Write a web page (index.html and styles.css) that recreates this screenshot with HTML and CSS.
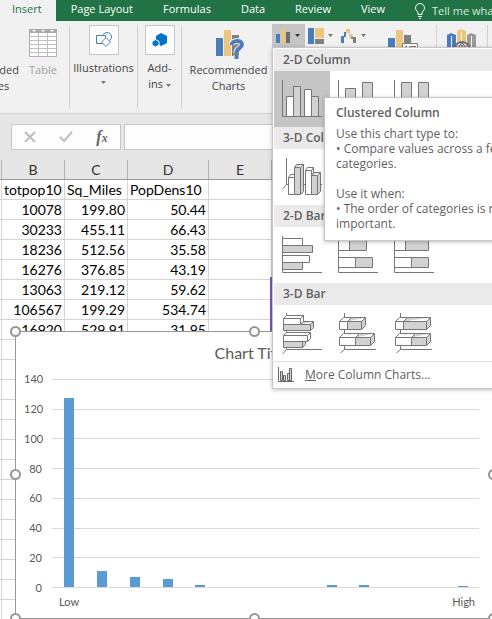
FILE: index.html
```html
<!DOCTYPE html>
<html lang="en">
<head>
<meta charset="UTF-8">
<meta name="viewport" content="width=device-width, initial-scale=1.0">
<title>Insert Column Chart</title>
<link rel="stylesheet" href="styles.css">
</head>
<body>
<nav class="tabs">
    <a href="#" class="tab active">Insert</a>
    <a href="#" class="tab">Page Layout</a>
    <a href="#" class="tab">Formulas</a>
    <a href="#" class="tab">Data</a>
    <a href="#" class="tab">Review</a>
    <a href="#" class="tab">View</a>
    <a href="#" class="tab tell-me">
        <svg width="10" height="16" viewBox="0 0 10 16" fill="none" stroke="#fff"><path d="M3 11.500V10C3 8.500.5 7.500.5 5A4.500 4.500 0 0 1 9.500 5C9.500 7.500 7 8.500 7 10V11.500ZM3 13.500H7M4 15.500H6"/></svg>
        Tell me what you want to do
    </a>
</nav>

<div class="ribbon">
    <button class="tool pivot">
        <svg width="30" height="30" viewBox="0 0 30 30"><path fill="#fff" stroke="#7f7f7f" d="M.5.5H29.500V29.500H.5ZM.5 8.500H29.500M8.500.5V29.500"/></svg>
        <span>Recommended<br>PivotTables</span>
    </button>
    <button class="tool table-tool" disabled>
        <svg width="28" height="28" viewBox="0 0 28 28"><path fill="#fff" stroke="#b5adb5" d="M.5.5H27.500V27.500H.5Z"/><path fill="#aaa" d="M0 0H28V4H0Z"/><path fill="#fff" d="M3 1H7L5 3ZM12 1H16L14 3ZM21 1H25L23 3Z"/><path stroke="#c3bcc3" d="M9.500 4V27M18.500 4V27M1 7.500H27M1 11.500H27M1 15.500H27M1 19.500H27M1 23.500H27"/></svg>
        <span>Table</span>
    </button>
    <div class="divider"></div>
    <button class="tool boxed illustrations">
        <span class="icon-box"><svg width="18" height="18" viewBox="0 0 18 18" fill="#fff" stroke="#4a7ebb"><circle cx="12" cy="6" r="4.500"/><path d="M1.500 4.500H10.500V12.500H1.500Z"/><path d="M11 6.500L15.500 11L11 15.500L6.500 11Z"/></svg></span>
        <span>Illustrations</span>
        <svg class="arrow" width="5" height="3"><path d="M0 0H5L2.500 3Z"/></svg>
    </button>
    <div class="divider"></div>
    <button class="tool boxed addins">
        <span class="icon-box"><svg width="16" height="16" viewBox="0 0 16 16" fill="#0072c6"><path d="M9 1L15 4V11L9 14L4 11V4Z"/><path stroke="#fdfdfd" d="M3.500 7.500L7 9.500V13L3.500 15L0 13V9.500Z"/></svg></span>
        <span>Add-<br>ins <svg class="arrow inline" width="5" height="3"><path d="M0 0H5L2.500 3Z"/></svg></span>
    </button>
    <div class="divider"></div>
    <button class="tool recommended">
        <svg width="30" height="30" viewBox="0 0 30 30"><path fill="#4a7ebb" d="M2 9H9V27H2Z"/><path fill="#ecc67c" d="M10 1H17V27H10Z"/><path fill="#7f7f7f" d="M18 6H25V27H18Z"/><path fill="none" stroke="#f1f1f1" stroke-width="6" d="M17.500 16C18 11 28 10.500 28 15.500C28 19 22.500 19 22.500 24M22.500 26V30"/><path fill="none" stroke="#4a7ebb" stroke-width="4" d="M17.500 16C18 11 28 10.500 28 15.500C28 19 22.500 19 22.500 24M22.500 26V30"/></svg>
        <span>Recommended<br>Charts</span>
    </button>
    <div class="chart-buttons">
        <div class="menu-anchor">
            <button class="chart-btn open" aria-label="Column chart">
                <svg width="16" height="16" viewBox="0 0 16 16"><path fill="#4a7ebb" d="M1 6H5V15H1Z"/><path fill="#ecc67c" d="M6 1H10V15H6Z"/><path fill="#6d6d6d" d="M11 4H15V15H11Z"/></svg>
                <svg class="arrow" width="5" height="3"><path d="M0 0H5L2.500 3Z"/></svg>
            </button>
            <div class="chart-menu">
                <h3>2-D Column</h3>
                <div class="choices">
                    <button class="choice selected" aria-label="Clustered Column">
                        <svg class="type-icon" viewBox="0 0 40 42"><path class="g" d="M11.500 7.500H18.500V37.500H11.500ZM29.500 17.500H36.500V37.500H29.500Z"/><path class="w" d="M4.500 17.500H11.500V37.500H4.500ZM22.500 10.500H29.500V37.500H22.500Z"/><path d="M.5 1V37.500H40"/></svg>
                    </button>
                    <button class="choice" aria-label="Stacked Column">
                        <svg class="type-icon" viewBox="0 0 40 42"><path class="g" d="M7.500 9.500H17.500V24.500H7.500ZM24.500 3.500H34.500V20.500H24.500Z"/><path class="w" d="M7.500 24.500H17.500V37.500H7.500ZM24.500 20.500H34.500V37.500H24.500Z"/><path d="M.5 1V37.500H40"/></svg>
                    </button>
                    <button class="choice" aria-label="100% Stacked Column">
                        <svg class="type-icon" viewBox="0 0 40 42"><path class="g" d="M7.500 3.500H17.500V24.500H7.500ZM24.500 3.500H34.500V20.500H24.500Z"/><path class="w" d="M7.500 24.500H17.500V37.500H7.500ZM24.500 20.500H34.500V37.500H24.500Z"/><path d="M.5 1V37.500H40"/></svg>
                    </button>
                </div>
                <h3>3-D Column</h3>
                <div class="choices">
                    <button class="choice" aria-label="3-D Clustered Column">
                        <svg class="type-icon" viewBox="0 0 40 42"><path d="M4.500 1V27.500H40M4.500 27.500L.5 32"/><path class="w" d="M6.500 20.500L8.500 17.500H14.500V37.500H6.500ZM6.500 20.500H12.500M23.500 13.500L25.500 10.500H31.500V37.500H23.500ZM23.500 13.500H29.500L31.500 10.500M29.500 13.500V37.500"/><path class="g" d="M12.500 10.500L14.500 7.500H21.500V34.500L18.500 37.500H12.500ZM12.500 10.500H18.500L21.500 7.500M18.500 10.500V37.500M29.500 18.500L31.500 15.500H38.500V34.500L35.500 37.500H29.500ZM29.500 18.500H35.500L38.500 15.500M35.500 18.500V37.500"/></svg>
                    </button>
                </div>
                <h3>2-D Bar</h3>
                <div class="choices">
                    <button class="choice" aria-label="Clustered Bar">
                        <svg class="type-icon" viewBox="0 0 40 42"><path class="w" d="M.5 3.500H20.500V10.500H.5ZM.5 20.500H27.500V27.500H.5Z"/><path class="g" d="M.5 10.500H30.500V17.500H.5ZM.5 27.500H20.500V34.500H.5Z"/><path d="M.5 1V37.500H40"/></svg>
                    </button>
                    <button class="choice" aria-label="Stacked Bar">
                        <svg class="type-icon" viewBox="0 0 40 42"><path class="w" d="M.5 5.500H11.500V15.500H.5ZM.5 22.500H17.500V32.500H.5Z"/><path class="g" d="M11.500 5.500H28.500V15.500H11.500ZM17.500 22.500H34.500V32.500H17.500Z"/><path d="M.5 1V37.500H40"/></svg>
                    </button>
                    <button class="choice" aria-label="100% Stacked Bar">
                        <svg class="type-icon" viewBox="0 0 40 42"><path class="w" d="M.5 5.500H11.500V15.500H.5ZM.5 22.500H17.500V32.500H.5Z"/><path class="g" d="M11.500 5.500H34.500V15.500H11.500ZM17.500 22.500H34.500V32.500H17.500Z"/><path d="M.5 1V37.500H40"/></svg>
                    </button>
                </div>
                <h3>3-D Bar</h3>
                <div class="choices">
                    <button class="choice" aria-label="3-D Clustered Bar">
                        <svg class="type-icon" viewBox="0 0 40 42"><path d="M4.500 0V36.500H40M4.500 36.500L.5 41"/><path class="w" d="M1.500 5.500L4.500 2.500H21.500V8.500L18.500 11.500H1.500ZM1.500 5.500H18.500L21.500 2.500M18.500 5.500V11.500M1.500 22.500L4.500 19.500H28.500V25.500L25.500 28.500H1.500ZM1.500 22.500H25.500L28.500 19.500M25.500 22.500V28.500"/><path class="g" d="M1.500 11.500H18.500L21.500 8.500H31.500V14.500L28.500 17.500H1.500ZM18.500 11.500H28.500L31.500 8.500M28.500 11.500V17.500M1.500 28.500H23.500V31.500L20.500 34.500H1.500ZM20.500 28.500V34.500"/></svg>
                    </button>
                    <button class="choice" aria-label="3-D Stacked Bar">
                        <svg class="type-icon" viewBox="0 0 40 42"><path d="M6.500 0V36.500H38M6.500 36.500L2.500 40"/><path class="w" d="M1.500 8.500L5.500 4.500H13.500L9.500 8.500V16.500H1.500ZM1.500 8.500H9.500M1.500 24.500L5.500 20.500H21.500L17.500 24.500V32.500H1.500ZM1.500 24.500H17.500"/><path class="g" d="M9.500 8.500L13.500 4.500H27.500V12.500L23.500 16.500H9.500ZM9.500 8.500H23.500L27.500 4.500M23.500 8.500V16.500M17.500 24.500L21.500 20.500H36.500V28.500L32.500 32.500H17.500ZM17.500 24.500H32.500L36.500 20.500M32.500 24.500V32.500"/></svg>
                    </button>
                    <button class="choice" aria-label="3-D 100% Stacked Bar">
                        <svg class="type-icon" viewBox="0 0 40 42"><path d="M6.500 0V36.500H38M6.500 36.500L2.500 40"/><path class="w" d="M1.500 8.500L5.500 4.500H13.500L9.500 8.500V16.500H1.500ZM1.500 8.500H9.500M1.500 24.500L5.500 20.500H21.500L17.500 24.500V32.500H1.500ZM1.500 24.500H17.500"/><path class="g" d="M9.500 8.500L13.500 4.500H36.500V12.500L32.500 16.500H9.500ZM9.500 8.500H32.500L36.500 4.500M32.500 8.500V16.500M17.500 24.500L21.500 20.500H36.500V28.500L32.500 32.500H17.500ZM17.500 24.500H32.500L36.500 20.500M32.500 24.500V32.500"/></svg>
                    </button>
                </div>
                <button class="more">
                    <svg width="16" height="16" viewBox="0 0 16 16" fill="#d0d0d0" stroke="#666"><path d="M2.500 4.500H4.500V13.500H2.500ZM5.500 8.500H7.500V13.500H5.500ZM9.500 6.500H11.500V13.500H9.500ZM11.500 1.500H13.500V13.500H11.500Z"/><path fill="none" d="M.5 0V14.500H16"/></svg>
                    <span><u>M</u>ore Column Charts...</span>
                </button>
                <div class="tooltip">
                    <strong>Clustered Column</strong>
                    <p>Use this chart type to:<br>• Compare values across a few<br>categories.</p>
                    <p>Use it when:<br>• The order of categories is not<br>important.</p>
                </div>
            </div>
        </div>
        <button class="chart-btn" aria-label="Hierarchy chart">
            <svg width="16" height="16" viewBox="0 0 16 16"><path fill="#4a7ebb" d="M0 0H6V16H0Z"/><path fill="#ecc67c" d="M7 0H16V10H7Z"/><path fill="#7f7f7f" d="M7 11H16V16H7Z"/></svg>
            <svg class="arrow" width="5" height="3"><path d="M0 0H5L2.500 3Z"/></svg>
        </button>
        <button class="chart-btn" aria-label="Waterfall chart">
            <svg width="16" height="16" viewBox="0 0 16 16"><path fill="#4a7ebb" d="M0 8H3V15H0ZM3 4H5V9H3Z"/><path fill="#ecc67c" d="M5 1H9V5H5ZM8 1H9V9H8ZM9 6H12V10H9Z"/><path fill="#7f7f7f" d="M10 9H15V15H12V11H10Z"/></svg>
            <svg class="arrow" width="5" height="3"><path d="M0 0H5L2.500 3Z"/></svg>
        </button>
    </div>
    <button class="tool pivot-chart" aria-label="PivotChart">
        <svg width="32" height="30" viewBox="0 0 32 30"><path fill="#4a7ebb" d="M0 9H7V27H0Z"/><path fill="#ecc67c" d="M8 1H15V27H8Z"/><path fill="#7f7f7f" d="M16 6H23V27H16Z"/><path fill="#fff" stroke="#7f7f7f" d="M14.500 14.500H29.500V29.500H14.500ZM17 17.500H19M21 17.500H28"/></svg>
    </button>
    <div class="divider"></div>
    <button class="tool map" aria-label="3D Map">
        <svg width="30" height="30" viewBox="0 0 30 30"><path fill="#4a7ebb" d="M0 6L4 4L9 6V27H0Z"/><path fill="#ecc67c" d="M10 2L14 0L19 2V27H10Z"/><path fill="#9a9a9a" d="M20 6L24 4L29 6V27H20Z"/><path stroke="#f1f1f1" d="M4.500 7V27M14.500 3V27M24.500 7V27"/><circle cx="15" cy="21" r="8" fill="#fff" stroke="#6d6d6d" stroke-width="2"/><path fill="none" stroke="#6d6d6d" d="M15 13V29M7 21H23M9 17H21M15 13Q8 21 15 29M15 13Q22 21 15 29"/></svg>
    </button>
    <div class="divider"></div>
</div>

<div class="formula-bar">
    <div class="formula-buttons">
        <button aria-label="Cancel"><svg width="12" height="12" viewBox="0 0 12 12" fill="none" stroke="#bdbdbd" stroke-width="2"><path d="M1 1L11 11M11 1L1 11"/></svg></button>
        <button aria-label="Enter"><svg width="14" height="12" viewBox="0 0 14 12" fill="none" stroke="#bdbdbd" stroke-width="2"><path d="M1 6L5 10L13 1"/></svg></button>
        <button aria-label="Insert Function"><i>f<small>x</small></i></button>
    </div>
    <input class="formula-input" type="text" aria-label="Formula">
</div>

<div class="sheet">
    <table class="cells">
        <colgroup><col class="col-a"><col class="col-b"><col class="col-c"><col class="col-d"><col class="col-e"><col></colgroup>
        <thead>
            <tr><th></th><th>B</th><th>C</th><th>D</th><th>E</th><th></th></tr>
        </thead>
        <tbody>
            <tr class="names"><td></td><td>totpop10</td><td>Sq_Miles</td><td>PopDens10</td><td></td><td></td></tr>
            <tr><td></td><td>10078</td><td>199.80</td><td>50.44</td><td></td><td></td></tr>
            <tr><td></td><td>30233</td><td>455.11</td><td>66.43</td><td></td><td></td></tr>
            <tr><td></td><td>18236</td><td>512.56</td><td>35.58</td><td></td><td></td></tr>
            <tr><td></td><td>16276</td><td>376.85</td><td>43.19</td><td></td><td></td></tr>
            <tr><td></td><td>13063</td><td>219.12</td><td>59.62</td><td></td><td></td></tr>
            <tr><td></td><td>106567</td><td>199.29</td><td>534.74</td><td></td><td></td></tr>
            <tr><td></td><td>16920</td><td>529.91</td><td>31.95</td><td></td><td></td></tr>
            <tr><td></td><td></td><td></td><td></td><td></td><td></td></tr>
            <tr><td></td><td></td><td></td><td></td><td></td><td></td></tr>
            <tr><td></td><td></td><td></td><td></td><td></td><td></td></tr>
            <tr><td></td><td></td><td></td><td></td><td></td><td></td></tr>
            <tr><td></td><td></td><td></td><td></td><td></td><td></td></tr>
            <tr><td></td><td></td><td></td><td></td><td></td><td></td></tr>
            <tr><td></td><td></td><td></td><td></td><td></td><td></td></tr>
            <tr><td></td><td></td><td></td><td></td><td></td><td></td></tr>
            <tr><td></td><td></td><td></td><td></td><td></td><td></td></tr>
            <tr><td></td><td></td><td></td><td></td><td></td><td></td></tr>
            <tr><td></td><td></td><td></td><td></td><td></td><td></td></tr>
            <tr><td></td><td></td><td></td><td></td><td></td><td></td></tr>
            <tr><td></td><td></td><td></td><td></td><td></td><td></td></tr>
            <tr><td></td><td></td><td></td><td></td><td></td><td></td></tr>
        </tbody>
    </table>
    <div class="range-marker"></div>

    <div class="chart">
        <h2>Chart Title</h2>
        <div class="plot-row">
            <div class="y-axis"><span>140</span><span>120</span><span>100</span><span>80</span><span>60</span><span>40</span><span>20</span><span>0</span></div>
            <div class="plot">
                <div class="gridlines"><hr><hr><hr><hr><hr><hr><hr><hr></div>
                <div class="bars">
                    <div><b style="height: 91%"></b></div>
                    <div><b style="height: 7.7%"></b></div>
                    <div><b style="height: 5%"></b></div>
                    <div><b style="height: 4%"></b></div>
                    <div><b style="height: 1%"></b></div>
                    <div></div>
                    <div></div>
                    <div></div>
                    <div><b style="height: 1%"></b></div>
                    <div><b style="height: 1%"></b></div>
                    <div></div>
                    <div></div>
                    <div><b style="height: 0.5%"></b></div>
                </div>
            </div>
        </div>
        <div class="x-axis"><span>Low</span><span>High</span></div>
        <i class="handle top left"></i>
        <i class="handle top center"></i>
        <i class="handle middle left"></i>
        <i class="handle middle right"></i>
        <i class="handle bottom left"></i>
        <i class="handle bottom center"></i>
        <i class="handle bottom right"></i>
    </div>
</div>
</body>
</html>
```
FILE: styles.css
```css
* {
    box-sizing: border-box;
}
body {
    margin: 0;
    min-height: 100vh;
    overflow: hidden;
    font-family: "Open Sans", "Noto Sans", sans-serif;
    font-size: 12px;
    color: #444;
    background: #fff;
}
button {
    padding: 0;
    border: 0;
    background: none;
    color: inherit;
    font: inherit;
}
svg {
    display: block;
    flex: none;
}

/* tabs */
.tabs {
    display: flex;
    height: 21px;
    background: #217346;
    font-size: 11px;
    overflow: hidden;
}
.tab {
    flex: none;
    padding: 0 15px;
    line-height: 18px;
    color: #fff;
    text-decoration: none;
    white-space: nowrap;
}
.tab.active {
    padding: 0 14px 0 12px;
    background: #f1f1f1;
    color: #217346;
}
.tell-me {
    display: flex;
    align-items: center;
    gap: 7px;
    color: #d8e8de;
}

/* ribbon */
.ribbon {
    display: flex;
    height: 93px;
    background: #f1f1f1;
    border-bottom: 1px solid #d2d2d2;
    overflow-x: clip;
}
.tool {
    display: flex;
    flex: none;
    flex-direction: column;
    align-items: center;
    gap: 3px;
    padding-top: 8px;
    font-size: 11px;
    line-height: 16px;
    text-align: center;
    white-space: nowrap;
}
.divider {
    flex: none;
    width: 1px;
    height: 84px;
    margin-top: 4px;
    background: #d2d2d2;
}
.boxed {
    gap: 5px;
    padding-top: 4px;
}
.icon-box {
    display: flex;
    align-items: center;
    justify-content: center;
    width: 30px;
    height: 30px;
    border: 1px solid #c6c6c6;
    background: #fdfdfd;
}
.arrow {
    fill: #777;
}
.arrow.inline {
    display: inline-block;
    vertical-align: middle;
}
.chart-buttons {
    display: flex;
    flex: none;
    align-items: flex-start;
    padding-top: 3px;
}
.chart-btn {
    display: flex;
    align-items: center;
    gap: 4px;
    width: 33px;
    height: 23px;
    padding-left: 3px;
}
.chart-btn.open {
    background: #c5c5c5;
}
.chart-btn.open .arrow {
    fill: #333;
}

.pivot {
    width: 82px;
    margin-left: -61px;
}
.table-tool {
    gap: 5px;
    width: 44px;
    margin-right: 4px;
    color: #a0a0a0;
}
.illustrations {
    width: 67px;
}
.addins {
    width: 43px;
}
.recommended {
    width: 87px;
    margin-left: 3px;
}
.pivot-chart {
    width: 65px;
}
.map {
    width: 50px;
}

/* column chart menu */
.menu-anchor {
    position: relative;
}
.chart-menu {
    position: absolute;
    z-index: 2;
    top: 100%;
    left: 0;
    width: 260px;
    padding: 1px;
    border: 1px solid #c6c6c6;
    background: #fff;
    box-shadow: 0 1px 4px rgba(0, 0, 0, 0.25);
    color: #5f5f5f;
}
.chart-menu h3 {
    margin: 0;
    padding-left: 9px;
    background: #eaeaea;
    font-size: 12px;
    font-weight: 600;
    line-height: 22px;
}
.choices {
    display: flex;
}
.choice {
    width: 56px;
    height: 56px;
    padding: 8px;
}
.choice.selected {
    background: #c5c5c5;
}
.type-icon {
    width: 40px;
    height: 42px;
    fill: none;
    stroke: #767676;
}
.type-icon .w {
    fill: #fff;
}
.type-icon .g {
    fill: #d2d2d2;
}
.more {
    display: flex;
    align-items: center;
    gap: 11px;
    width: 100%;
    height: 26px;
    padding-left: 4px;
    border-top: 1px solid #dedede;
}
.tooltip {
    position: absolute;
    top: 49px;
    left: 51px;
    width: 200px;
    padding: 7px 11px;
    border: 1px solid #c6c6c6;
    background: #fff;
    box-shadow: 0 1px 4px rgba(0, 0, 0, 0.25);
    line-height: 15px;
    white-space: nowrap;
}
.tooltip strong {
    font-weight: 600;
}
.tooltip p {
    margin: 6px 0 15px;
}
.tooltip p + p {
    margin: 0 0 2px;
}

/* formula bar */
.formula-bar {
    display: flex;
    gap: 3px;
    height: 46px;
    padding: 10px 0 10px 11px;
    background: #e6e6e6;
}
.formula-buttons {
    display: flex;
    flex: none;
    width: 110px;
    border: 1px solid #c6c6c6;
    background: #fdfdfd;
}
.formula-buttons button {
    display: flex;
    flex: 1;
    align-items: center;
    justify-content: center;
    font: bold 16px "Liberation Serif", serif;
    color: #666;
}
.formula-buttons small {
    font-size: 12px;
}
.formula-input {
    flex: 1;
    min-width: 0;
    border: 1px solid #c6c6c6;
    border-right: 0;
    background: #fdfdfd;
}

/* sheet */
.sheet {
    position: relative;
    font-family: Lato, sans-serif;
}
.cells {
    width: 100%;
    table-layout: fixed;
    border-collapse: separate;
    border-spacing: 0;
    font-size: 14px;
    color: #000;
}
.col-a {
    width: 2px;
}
.col-b, .col-c, .col-e {
    width: 63px;
}
.col-d {
    width: 81px;
}
.cells th, .cells td {
    height: 20px;
    padding: 0 2px 0 0;
    border-right: 1px solid #d4d4d4;
    border-bottom: 1px solid #d4d4d4;
    line-height: 19px;
    text-align: right;
    overflow: hidden;
}
.cells td:first-child {
    padding: 0;
}
.cells th {
    padding: 0;
    background: #e6e6e6;
    border-right-color: #b1b1b1;
    border-bottom-color: #999;
    font-weight: normal;
    text-align: center;
    color: #333;
}
.cells .names td {
    padding: 0 0 0 2px;
    text-align: left;
}
.range-marker {
    position: absolute;
    top: 117px;
    left: 270px;
    width: 5px;
    height: 60px;
    border-top: 5px solid #7e57b5;
    border-left: 2px solid #7e57b5;
}

/* chart */
.chart {
    position: absolute;
    top: 171px;
    left: 15px;
    right: -2px;
    padding: 9px 14px 8px 8px;
    border: 1px solid #969696;
    background: #fff;
    color: #595959;
}
.chart h2 {
    margin: 0 0 14px;
    font-size: 16px;
    font-weight: normal;
    line-height: 24px;
    text-align: center;
}
.plot-row {
    display: flex;
    gap: 10px;
    height: 209px;
}
.y-axis {
    display: flex;
    flex-direction: column;
    justify-content: space-between;
    width: 18px;
    margin: -8px 0;
    font-size: 11px;
    line-height: 16px;
    text-align: right;
}
.plot {
    display: grid;
    flex: 1;
}
.gridlines, .bars {
    grid-area: 1 / 1;
    display: flex;
}
.gridlines {
    flex-direction: column;
    justify-content: space-between;
}
.gridlines hr {
    width: 100%;
    height: 1px;
    margin: 0;
    border: 0;
    background: #d9d9d9;
}
.bars {
    padding: 0 0 1px 1px;
}
.bars div {
    display: flex;
    flex: 1;
    align-items: flex-end;
    justify-content: center;
}
.bars b {
    width: 10px;
    background: #5b9bd5;
}
.x-axis {
    display: flex;
    justify-content: space-between;
    padding: 6px 4px 0 35px;
    font-size: 11px;
    line-height: 16px;
}

.handle {
    position: absolute;
    width: 11px;
    height: 11px;
    border: 2px solid #969696;
    border-radius: 50%;
    background: #fff;
}
.handle.top {
    top: -6px;
}
.handle.middle {
    top: calc(50% - 6px);
}
.handle.bottom {
    bottom: -6px;
}
.handle.left {
    left: -6px;
}
.handle.center {
    left: calc(50% - 6px);
}
.handle.right {
    right: -6px;
}
```
